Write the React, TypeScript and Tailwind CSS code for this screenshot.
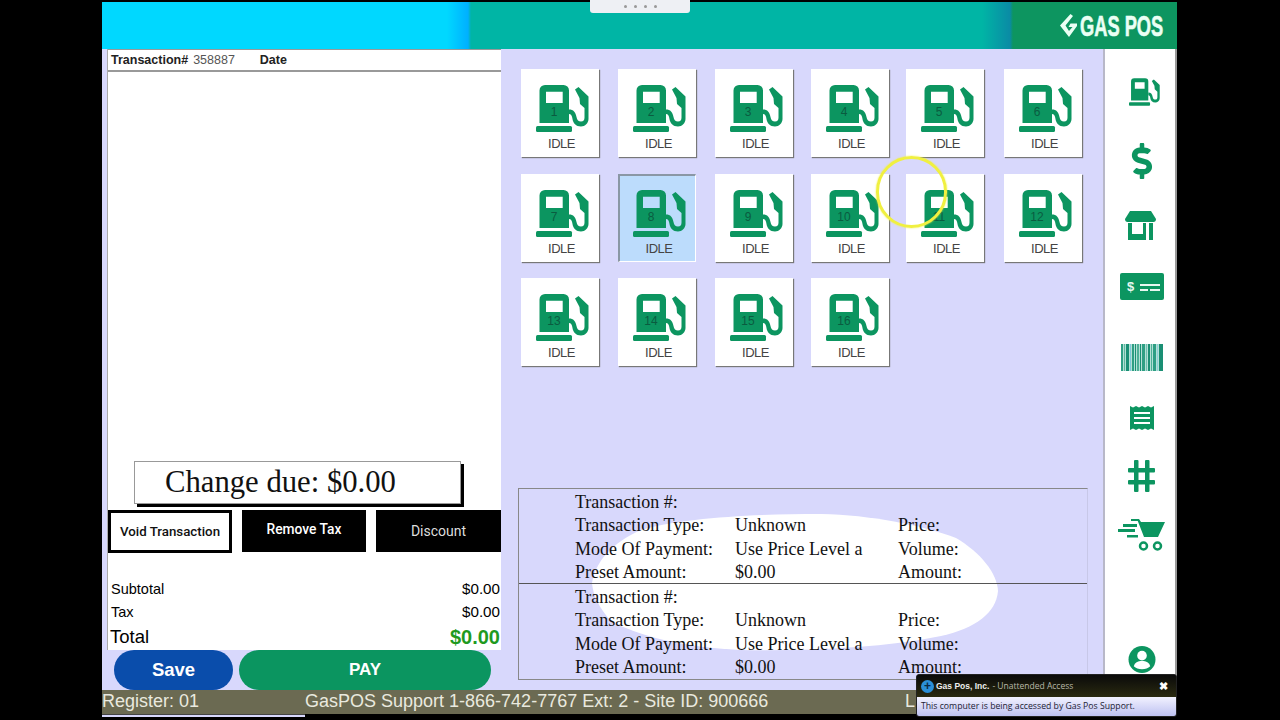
import { FaDollarSign } from 'react-icons/fa'

const PUMPS = Array.from({ length: 16 }, (_, i) => i + 1)

const SANS = "font-['Liberation_Sans',Arial,sans-serif]"
const SERIF = "font-['Liberation_Serif','Times_New_Roman',serif]"

function PumpIcon({ className }: { className?: string }) {
  return (
    <svg viewBox="0 0 53 47" className={className} fill="currentColor">
      <path fillRule="evenodd" d="M3.500 5.500a5.500 5.500 0 0 1 5.500-5.500h18.500a5.500 5.500 0 0 1 5.500 5.500v32.500h-29.500zM10 6.700v11.300h16.700V6.700z" />
      <rect x="0" y="41" width="36" height="6" rx="1.500" />
      <path d="M39 4.500L42.500 2l10 9.500V34c0 4-3.500 7.500-7.500 7.500-5 0-8-3.500-8.500-7.500-.5-3.500-1.500-5-3.500-5v-4.500c4.500 0 6.500 2.500 7.500 7.500.5 3 2 4.500 4.500 4.500s3.500-1.500 3.500-4V23l-4.500-4-.5-6z" />
    </svg>
  )
}

function PumpCard({ n }: { n: number }) {
  const selected = n === 8
  return (
    <div
      className={
        selected
          ? 'relative w-[78px] h-[88px] bg-[#bcdcfc] border-t-2 border-l-2 border-t-[#8a97a5] border-l-[#8a97a5] border-r border-b border-r-white border-b-white flex flex-col items-center'
          : 'relative w-[78px] h-[88px] bg-white shadow-[1px_1px_1px_#777] flex flex-col items-center'
      }
    >
      <div className={selected ? 'relative mt-[14px] ml-[4px] text-[#0c9560]' : 'relative mt-[16px] ml-[5px] text-[#0c9560]'}>
        <PumpIcon className="w-[53px] h-[47px]" />
        <span className={`absolute left-0 w-[36px] top-[20px] text-center text-[12px] leading-[14px] text-[#0a5c40] ${SANS}`}>
          {n}
        </span>
      </div>
      <span className={`mt-[4px] ml-[3px] text-[13px] leading-[16px] tracking-[-0.5px] text-[#444] ${SANS}`}>IDLE</span>
    </div>
  )
}

function BarcodeIcon() {
  const bars = [
    [0, 2, '#2f9f84'], [3, 1, '#5fb89f'], [5, 3, '#1a8f74'], [9, 1, '#7fc8d8'], [11, 2, '#2f9f84'],
    [14, 1, '#1a8f74'], [16, 2, '#4fb097'], [19, 1, '#1a8f74'], [21, 3, '#2f9f84'], [25, 1, '#6fbfb0'],
    [27, 2, '#1a8f74'], [30, 1, '#4fb097'], [32, 3, '#2f9f84'], [36, 1, '#8fd0d8'], [38, 4, '#1a8f74'],
  ] as const
  return (
    <svg viewBox="0 0 42 27" className="w-[42px] h-[27px]">
      <rect width="42" height="27" fill="#b4e0d6" />
      {bars.map(([x, w, c]) => (
        <rect key={x} x={x} y="0" width={w} height="27" fill={c} />
      ))}
    </svg>
  )
}

function DetailSection({ withDivider }: { withDivider?: boolean }) {
  return (
    <div
      className={
        withDivider
          ? 'grid grid-cols-[160px_163px_1fr] pl-[56px] pt-[2px] h-[95px] border-b border-[#555] text-[18px] leading-[23.4px] text-[#111]'
          : 'grid grid-cols-[160px_163px_1fr] pl-[56px] pt-[2px] text-[18px] leading-[23.4px] text-[#111]'
      }
    >
      <span className="col-span-3">Transaction #:</span>
      <span>Transaction Type:</span>
      <span>Unknown</span>
      <span>Price:</span>
      <span>Mode Of Payment:</span>
      <span>Use Price Level a</span>
      <span>Volume:</span>
      <span>Preset Amount:</span>
      <span>$0.00</span>
      <span>Amount:</span>
    </div>
  )
}

export default function App() {
  return (
    <div className={`relative w-[1280px] h-[720px] bg-black overflow-hidden pl-[102px] pt-[2px] ${SANS}`}>
      <div className="w-[1075px] h-[712px] flex flex-col bg-[#d8d8fc]">
        {/* Header */}
        <div className="h-[47px] shrink-0 flex items-center justify-end pr-[12px] bg-[linear-gradient(90deg,#00d8ff_0,#00d8ff_345px,#00b0ff_366px,#00b5a5_369px,#00b5a5_880px,#0a8ba5_908px,#0d9560_911px)]">
          <svg viewBox="0 0 17 23" className="mr-[3px] w-[17px] h-[23px] text-[#eafff4]" fill="currentColor">
            <path d="M10.500 0L13 2 5.500 11.500 9 17l3.500-4h-4l2-3.500H17V12L9 23 0 11.500z" />
          </svg>
          <span className="w-[85px] text-[29px] leading-[30px] font-bold text-[#eafff4] [-webkit-text-stroke:0.6px_#eafff4] whitespace-nowrap origin-left scale-x-[0.63]">
            GAS POS
          </span>
        </div>

        <div className="flex-1 flex min-h-0">
          {/* Ticket */}
          <div className="w-[399px] shrink-0 pl-[5px] flex flex-col">
            <div className="h-[601px] shrink-0 bg-white border-l border-[#aaa] flex flex-col text-black">
              <div className="h-[23px] shrink-0 border-b-2 border-t border-t-[#999] border-b-[#999] flex items-center pl-[3px] text-[12.5px]">
                <span className="font-bold text-[#222]">Transaction#</span>
                <span className="ml-[5px] text-[#555]">358887</span>
                <span className="ml-[25px] font-bold text-[#222]">Date</span>
              </div>
              <div className="flex-1" />
              <div className={`ml-[26px] w-[327px] h-[43px] bg-white border border-[#999] shadow-[3px_3px_0_#000] pl-[30px] text-[30.7px] leading-[40px] text-[#111] ${SERIF}`}>
                Change due: $0.00
              </div>
              <div className="flex mt-[6px] gap-[10px] font-['Roboto',sans-serif] h-[43px]">
                <button className="w-[124px] bg-white border-[3px] border-black font-medium text-[13.3px] text-[#111]">Void Transaction</button>
                <button className="w-[124px] h-[42px] bg-black font-medium text-[13.8px] text-white pb-[3px]">Remove Tax</button>
                <button className="w-[125px] h-[42px] bg-black text-[14px] text-[#ddd]">Discount</button>
              </div>
              <div className="mt-[25px] pl-[3px] pr-[1px] flex flex-col">
                <div className="h-[23px] flex items-center justify-between text-[14.5px]"><span>Subtotal</span><span className="text-[15.2px]">$0.00</span></div>
                <div className="h-[23px] flex items-center justify-between text-[14.5px]"><span>Tax</span><span className="text-[15.2px]">$0.00</span></div>
                <div className="h-[26px] flex items-center justify-between text-[18.5px]">
                  <span className="-ml-[1px]">Total</span>
                  <span className="font-bold text-[20px] text-[#1f9a1f]">$0.00</span>
                </div>
              </div>
            </div>
            <div className="flex gap-[6px] pl-[7px] h-[40px] shrink-0">
              <button className="w-[119px] rounded-full bg-[#0a4dab] text-white font-bold text-[18.5px]">Save</button>
              <button className="w-[252px] rounded-full bg-[#0b9560] text-white font-bold text-[17px]">PAY</button>
            </div>
          </div>

          {/* Pumps and details */}
          <div className="flex-1 flex flex-col justify-between pl-[20px] pt-[20px] pb-[10px] relative">
            <div className="grid grid-cols-[97px_97px_96px_95px_98px_79px] gap-y-[16.5px]">
              {PUMPS.map((n) => (
                <PumpCard key={n} n={n} />
              ))}
            </div>
            <div className={`relative -ml-[3px] w-[570px] h-[192px] border border-[#888] border-r-[#c8c8e8] ${SERIF}`}>
              {/* marker smudge painted over the screen recording */}
              <svg viewBox="0 0 410 140" className="absolute left-[72px] top-[24px] w-[410px] h-[140px]" fill="#fff">
                <path d="M1 70C4 50 20 30 50 17 90 5 160 1 230 1c50 1 100 11 135 24 25 15 41 35 42 53-2 22-22 37-57 45-60 12-130 15-200 14C90 134 45 122 20 108 8 95 2 82 1 70z" />
              </svg>
              <div className="relative">
                <DetailSection withDivider />
                <DetailSection />
              </div>
            </div>
          </div>

          {/* Side nav */}
          <div className="w-[74px] shrink-0 bg-white border-l-2 border-[#b8b8c8] border-r-2 border-r-[#999] flex flex-col items-center text-[#0c9560]">
            <PumpIcon className="mt-[29px] ml-[9px] w-[31px] h-[28px]" />
            <FaDollarSign className="mt-[37px] ml-[4px] w-[26px] h-[36px]" />
            <svg viewBox="0 0 31 29" className="mt-[32px] w-[31px] h-[29px]" fill="currentColor">
              <path d="M5 0h21l5 8c0 2-1 3-2.500 3H2.500C1 11 0 10 0 8z" />
              <path d="M3 12h4v11h11V12h3v17H3z" />
              <rect x="24" y="12" width="4" height="17" />
            </svg>
            <svg viewBox="0 0 44 27" className="mt-[33px] ml-[4px] w-[44px] h-[27px]">
              <rect width="44" height="27" rx="2" fill="currentColor" />
              <rect x="20" y="11" width="20" height="2" fill="#e8f8f0" />
              <rect x="20" y="16" width="8" height="2" fill="#e8f8f0" />
              <rect x="30" y="16" width="10" height="2" fill="#e8f8f0" />
              <text x="7" y="18" fontSize="13" fontWeight="700" fill="#e8f8f0" fontFamily="Liberation Sans">$</text>
            </svg>
            <div className="mt-[44px] ml-[4px]"><BarcodeIcon /></div>
            <svg viewBox="0 0 24 26" className="mt-[34px] ml-[4px] w-[24px] h-[26px]">
              <path d="M0 1l3 1.500L6 1l3 1.500L12 1l3 1.500L18 1l3 1.500L24 1v24l-3-1.500-3 1.500-3-1.500-3 1.500-3-1.500L6 25l-3-1.500L0 25z" fill="currentColor" />
              <rect x="4" y="7" width="16" height="2" fill="#fff" />
              <rect x="4" y="12" width="16" height="2" fill="#fff" />
              <rect x="4" y="17" width="16" height="2" fill="#fff" />
            </svg>
            <svg viewBox="0 0 27 32" className="mt-[29px] ml-[3px] w-[27px] h-[32px]" fill="currentColor">
              <rect x="6" y="0" width="4.500" height="32" rx="1" />
              <rect x="17" y="0" width="4.500" height="32" rx="1" />
              <rect x="0" y="8" width="27" height="4.500" rx="1" />
              <rect x="0" y="20" width="27" height="4.500" rx="1" />
            </svg>
            <svg viewBox="0 0 47 33" className="mt-[26px] ml-[3px] w-[47px] h-[33px]" fill="currentColor">
              <rect x="13" y="1" width="7" height="2" />
              <rect x="5" y="6" width="14" height="3" />
              <rect x="0" y="11" width="17" height="3" />
              <rect x="9" y="17" width="11" height="2.500" />
              <path d="M19 1h2l2 3h24l-7 15H26z" />
              <circle cx="25.500" cy="28" r="3.500" fill="none" stroke="currentColor" strokeWidth="2.500" />
              <circle cx="39.500" cy="28" r="3.500" fill="none" stroke="currentColor" strokeWidth="2.500" />
            </svg>
            <svg viewBox="0 0 28 28" className="mt-[95px] ml-[4px] w-[28px] h-[27px]">
              <circle cx="14" cy="14" r="14" fill="currentColor" />
              <circle cx="14" cy="10" r="5" fill="#fff" />
              <path d="M5.500 21c1-4 4-5.500 8.500-5.500s7.500 1.500 8.500 5.500c-2 2-5 3-8.500 3s-6.500-1-8.500-3z" fill="#fff" />
            </svg>
          </div>
        </div>

        {/* Status bar */}
        <div className="h-[24px] shrink-0 bg-[#6b6a52] text-[#e9e9df] text-[18px] leading-[22px] flex whitespace-nowrap">
          <span className="w-[203px]">Register: 01</span>
          <span className="w-[600px]">GasPOS Support 1-866-742-7767 Ext: 2 - Site ID: 900666</span>
          <span>L</span>
        </div>
      </div>
      <div className="w-[203px] h-[3px] bg-[#d8d8fc] border-t border-[#444]" />

      {/* Remote toolbar handle */}
      <div className="absolute left-[590px] top-0 w-[100px] h-[13px] bg-[#eef0f4] rounded-b-[3px] flex items-center justify-center gap-[7px]">
        <span className="w-[3px] h-[3px] rounded-full bg-[#999]" />
        <span className="w-[3px] h-[3px] rounded-full bg-[#999]" />
        <span className="w-[3px] h-[3px] rounded-full bg-[#999]" />
        <span className="w-[3px] h-[3px] rounded-full bg-[#999]" />
      </div>

      {/* Cursor highlight */}
      <div className="absolute left-[876px] top-[156px] w-[71px] h-[72px] rounded-full border-[3px] border-[#f0f040] shadow-[0_0_2px_#f0f040]" />

      {/* Remote access notice */}
      <div className="absolute left-[916px] top-[674px] w-[261px] h-[43px] rounded-[3px] bg-black overflow-hidden border border-[#222]">
        <div className="h-[22px] flex items-center pl-[4px] pr-[8px] bg-[linear-gradient(#0a0a0a,#2a2a10)] text-[8.5px]">
          <span className="w-[13px] h-[13px] rounded-full bg-[#2a8fd8] flex items-center justify-center text-[#0c2a44] text-[12px] font-bold leading-none">+</span>
          <span className="ml-[2px] font-bold text-[#eee]">Gas Pos, Inc.</span>
          <span className="ml-[3px] text-[#b8b8a8] font-['Open_Sans',sans-serif]">- Unattended Access</span>
          <span className="ml-auto text-white font-bold text-[11px] leading-none">✖</span>
        </div>
        <div className="h-[21px] pl-[4px] bg-[linear-gradient(#f2f2ff,#b8bcf0)] text-[8.7px] leading-[18px] text-[#223] font-['Open_Sans',sans-serif] whitespace-nowrap">
          This computer is being accessed by Gas Pos Support.
        </div>
      </div>
    </div>
  )
}
